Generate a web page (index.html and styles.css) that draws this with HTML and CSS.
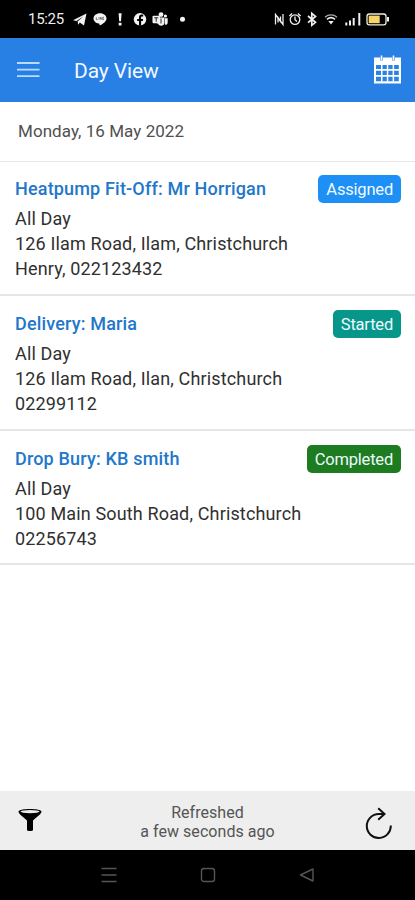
FILE: index.html
```html
<!DOCTYPE html>
<html lang="en">
<head>
<meta charset="utf-8">
<title>Day View</title>
<link rel="stylesheet" href="styles.css">
</head>
<body>
<div class="status">
  <span class="clock">15:25</span>
  <svg class="status-left" width="114" height="18" viewBox="73 10 114 18" fill="#f4f4f4">
    <path d="M73 20.2 86.5 13.5 84 25.5 79.8 22.6 78.2 24.8 77.6 21.6 83.5 16.2 76.5 21Z"/>
    <path d="M100 13.2c-3.700 0-6.500 2.300-6.500 5.300 0 2.600 2.300 4.600 5.200 5.100l.8.200v1.800c3-1.300 7-4 7-7.100 0-3-2.800-5.300-6.500-5.300Z"/>
    <path d="M96.300 17.200v2.400h1.400M99 17.200v2.400M100.400 19.600v-2.400l1.600 2.400v-2.400M104 17.200h-1v2.400h1" stroke="#333" stroke-width=".6" fill="none"/>
    <path d="M118.600 13.200h3l-.6 8h-1.800ZM118.700 22.800h2.800v2.600h-2.800Z"/>
    <circle cx="140" cy="19.300" r="6.200"/>
    <path d="M139 25.700v-4.800h-1.800v-2h1.800v-1.500c0-1.900 1-2.800 2.700-2.800l1.500.1v1.800h-1c-.9 0-1.100.4-1.100 1.100v1.300h2l-.3 2h-1.700v4.800Z" fill="#000"/>
    <circle cx="161" cy="14.600" r="2.400"/><circle cx="165.400" cy="16" r="1.600"/>
    <path d="M157 17.500h7.500v5c0 4-5.500 4.200-6.500 1h-1ZM165 18.200h2.700v4c0 2-1.400 2.700-2.700 2.500Z"/>
    <rect x="152.500" y="15.800" width="7.500" height="7.500" rx="1"/>
    <path d="M154.200 17.800h4M156.200 17.800v4M161 18.500v5" stroke="#111" stroke-width=".9"/>
    <circle cx="182.500" cy="19.200" r="2.500"/>
  </svg>
  <svg class="status-right" width="115" height="18" viewBox="274 10 115 18" fill="none" stroke="#f0f0f0" stroke-width="1.300">
    <path d="M275.500 24.500V14.500l5 7V16.500M278 22.500V17.500l5 7V14"/>
    <circle cx="295" cy="19.600" r="4.800"/>
    <path d="m289.300 16 2.800-2.500M300.700 16l-2.800-2.500M295 16.500v3.300l2 1.700"/>
    <path d="m308 16 7.500 6.300-3.700 3V13.400l3.700 3-7.500 6.300" stroke-width="1.700"/>
    <path d="M325 17.200c3.400-3 8.600-3 12 0" stroke="#aaa"/>
    <path d="M327 19.300c2.400-2 5.600-2 8 0" stroke-width="1.600"/>
    <path d="M328.300 21h5.400l-2.700 3.600Z" fill="#f0f0f0" stroke="none"/>
    <path d="M346.300 22.500v3M350 20.500v5M353.700 18v7.500M359.300 13v12.500" stroke-width="2"/>
    <rect x="367" y="14" width="19" height="10.800" rx="2.300" stroke="#f4edd8"/>
    <rect x="368.700" y="15.600" width="11" height="7.600" fill="#f8d568" stroke="none"/>
    <path d="M388 17v4.500" stroke-width="2"/>
  </svg>
</div>
<header class="appbar">
  <svg class="menu" width="24" height="18" viewBox="0 0 24 18" stroke="#b9dcff" stroke-width="1.800"><path d="M0 2h22.500M0 8.700h22.500M0 15.200h22.500"/></svg>
  <h1>Day View</h1>
  <svg class="calendar" width="29" height="31" viewBox="0 0 29 31">
    <path d="M1 2.500h27v26H1Z" fill="#fff"/>
    <path d="M3 10h5v4H3ZM9.500 10h4.300v4H9.500ZM15.300 10h4.300v4h-4.300ZM21.100 10h4.700v4h-4.700ZM3 15.700h5v4.300H3ZM9.500 15.700h4.300V20H9.500ZM15.300 15.700h4.300V20h-4.300ZM21.100 15.700h4.700V20h-4.700ZM3 21.700h5v4.500H3ZM9.500 21.700h4.300v4.500H9.500ZM15.300 21.700h4.300v4.500h-4.300ZM21.100 21.700h4.700v4.500h-4.700Z" fill="#2b82e5"/>
    <path d="M8.500 2.500v3M20.500 2.500v3" stroke="#2b82e5" stroke-width="2.500"/>
    <path d="M8.500.5v4.500M20.500.5v4.500" stroke="#fff" stroke-width="1.500"/>
  </svg>
</header>
<div class="date">Monday, 16 May 2022</div>
<main>
  <article class="job">
    <div class="job-head"><h2>Heatpump Fit-Off: Mr Horrigan</h2><span class="badge assigned">Assigned</span></div>
    <p>All Day</p><p>126 Ilam Road, Ilam, Christchurch</p><p>Henry, 022123432</p>
  </article>
  <article class="job">
    <div class="job-head"><h2>Delivery: Maria</h2><span class="badge started">Started</span></div>
    <p>All Day</p><p>126 Ilam Road, Ilan, Christchurch</p><p>02299112</p>
  </article>
  <article class="job">
    <div class="job-head"><h2>Drop Bury: KB smith</h2><span class="badge completed">Completed</span></div>
    <p>All Day</p><p>100 Main South Road, Christchurch</p><p>02256743</p>
  </article>
</main>
<footer class="toolbar">
  <svg class="filter" width="24" height="24" viewBox="0 0 24 24"><path d="M.5 3.500C.5 0 23.500 0 23.500 3.500c0 2-3 4.200-8.500 9V22c0 1.300-6 1.300-6 0v-9.500C3.500 7.700.5 5.500.5 3.500Z"/><ellipse cx="12" cy="3.600" rx="9.600" ry="1.600" fill="#eee"/></svg>
  <div class="refreshed">Refreshed<br>a few seconds ago</div>
  <svg class="refresh" width="28" height="32" viewBox="0 0 28 32" fill="none" stroke="#111" stroke-width="2"><path d="M25.800 18.500A12 12 0 1 1 13.800 7H19"/><path d="m13.200 1.300 6.300 5.700-6.300 5.700"/></svg>
</footer>
<nav class="system">
  <svg width="16" height="18" viewBox="0 0 16 18" stroke="#555" stroke-width="1.500"><path d="M.5 2.500h15M.5 9h15M.5 15.500h15"/></svg>
  <svg width="16" height="18" viewBox="0 0 16 18" fill="none" stroke="#555" stroke-width="1.400"><rect x="1.500" y="2.500" width="13" height="13" rx="2.500"/></svg>
  <svg width="16" height="18" viewBox="0 0 16 18" fill="none" stroke="#555" stroke-width="1.400"><path d="M14 3v12L1.500 9Z" stroke-linejoin="round"/></svg>
</nav>
</body>
</html>
```
FILE: styles.css
```css
* { box-sizing: border-box; margin: 0; padding: 0; }
body {
  width: 415px;
  height: 900px;
  display: flex;
  flex-direction: column;
  background: #fff;
  font-family: Roboto, sans-serif;
  color: #303030;
  overflow: hidden;
}
svg { display: block; flex: none; }
.status {
  height: 38px;
  flex: none;
  display: flex;
  align-items: flex-start;
  background: #000;
  padding: 10px 26px 0 28px;
}
.clock { width: 45px; font-size: 15px; line-height: 19px; letter-spacing: -.3px; color: #eee; }
.status-right { margin-left: auto; }
.appbar {
  height: 64px;
  flex: none;
  display: flex;
  align-items: center;
  padding: 0 13px 0 17px;
  background: #2880e4;
}
.appbar h1 { margin-left: 33px; padding-top: 2px; font-size: 21px; font-weight: 400; color: #f2f8ff; letter-spacing: -.1px; }
.calendar { margin-left: auto; }
.date {
  height: 60px;
  flex: none;
  padding-left: 18px;
  line-height: 59px;
  font-size: 17px;
  letter-spacing: .05px;
  color: #505050;
  border-bottom: 1px solid #e6e6e6;
}
.job { height: 134.700px; padding: 14px 14px 0 15px; border-bottom: 2px solid #e6e6e6; }
.job:first-child { height: 134px; padding-top: 13.300px; }
.job-head { display: flex; justify-content: space-between; height: 31px; }
.job h2 { font-size: 18px; line-height: 27px; font-weight: 500; color: #2277ca; letter-spacing: .17px; }
.job p { font-size: 18px; line-height: 25px; white-space: nowrap; letter-spacing: .15px; }
.badge {
  height: 28px;
  padding: 0 8px;
  border-radius: 5px;
  font-size: 16.500px;
  line-height: 30px;
  letter-spacing: -.2px;
  color: #eefaff;
}
.assigned { background: #1e90f5; }
.started { background: #06978a; }
.completed { background: #1d7c20; }
.toolbar {
  height: 59px;
  flex: none;
  margin-top: auto;
  display: grid;
  grid-template-columns: 50px 1fr 50px;
  align-items: center;
  background: #eee;
}
.filter { margin: -1px 0 0 17.500px; }
.refresh { margin: 5px 0 0 0; }
.refreshed { text-align: center; font-size: 16px; line-height: 19px; letter-spacing: .05px; color: #555; padding-top: 2px; }
.system { height: 50px; flex: none; display: flex; justify-content: center; align-items: center; gap: 83px; background: #000; }
```
